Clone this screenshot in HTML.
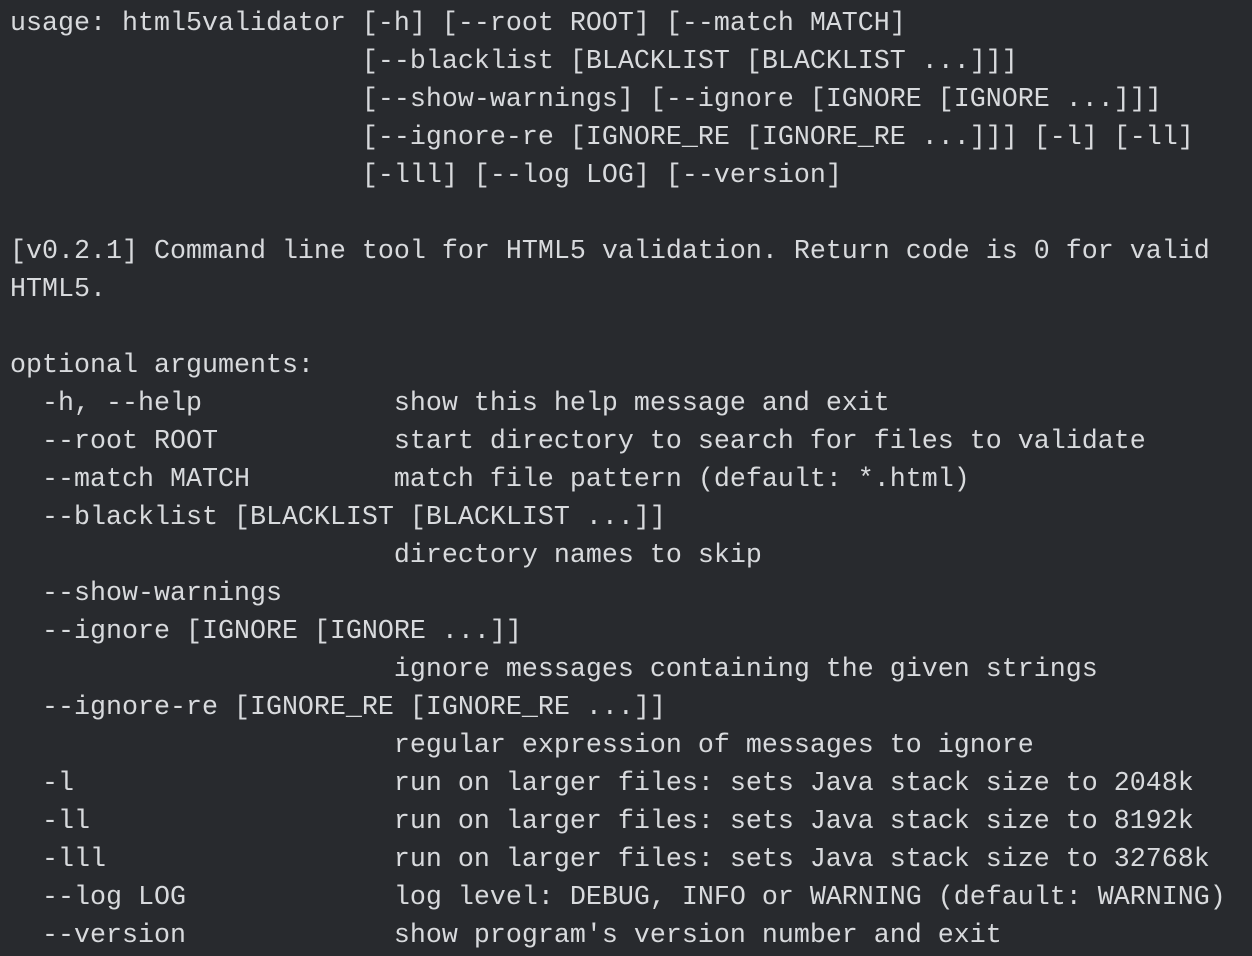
<!DOCTYPE html>
<html><head><style>
html,body{margin:0;background:#282a2e;width:1252px;height:956px;overflow:hidden}
pre{margin:0;padding:5px 0 0 10px;font-family:"Liberation Mono","DejaVu Sans Mono",monospace;font-size:26.67px;line-height:38px;color:#d8dadd;white-space:pre}
</style></head><body><pre>usage: html5validator [-h] [--root ROOT] [--match MATCH]
                      [--blacklist [BLACKLIST [BLACKLIST ...]]]
                      [--show-warnings] [--ignore [IGNORE [IGNORE ...]]]
                      [--ignore-re [IGNORE_RE [IGNORE_RE ...]]] [-l] [-ll]
                      [-lll] [--log LOG] [--version]

[v0.2.1] Command line tool for HTML5 validation. Return code is 0 for valid
HTML5.

optional arguments:
  -h, --help            show this help message and exit
  --root ROOT           start directory to search for files to validate
  --match MATCH         match file pattern (default: *.html)
  --blacklist [BLACKLIST [BLACKLIST ...]]
                        directory names to skip
  --show-warnings
  --ignore [IGNORE [IGNORE ...]]
                        ignore messages containing the given strings
  --ignore-re [IGNORE_RE [IGNORE_RE ...]]
                        regular expression of messages to ignore
  -l                    run on larger files: sets Java stack size to 2048k
  -ll                   run on larger files: sets Java stack size to 8192k
  -lll                  run on larger files: sets Java stack size to 32768k
  --log LOG             log level: DEBUG, INFO or WARNING (default: WARNING)
  --version             show program's version number and exit
</pre></body></html>
